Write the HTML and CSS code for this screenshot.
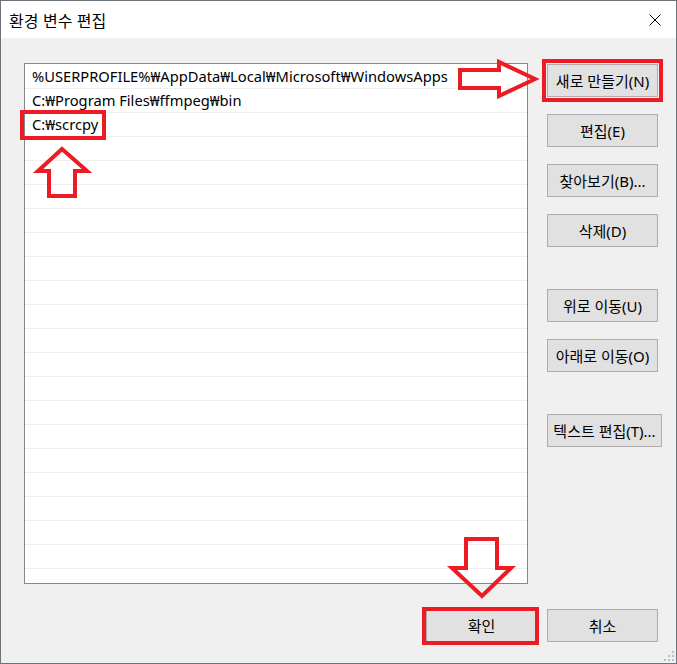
FILE: index.html
```html
<!DOCTYPE html>
<html lang="ko">
<head>
<meta charset="utf-8">
<title>환경 변수 편집</title>
<link rel="stylesheet" href="styles.css">
</head>
<body>
<div class="window">
  <div class="titlebar">
    <span class="title">환경 변수 편집</span>
    <span class="close">
      <svg width="12" height="12" viewBox="0 0 12 12"><path d="M0.5 0.5 L11.5 11.5 M11.5 0.5 L0.5 11.5" stroke="#000" stroke-width="1" fill="none"/></svg>
    </span>
  </div>
  <div class="content">
    <div class="list">
      <div class="row">%USERPROFILE%₩AppData₩Local₩Microsoft₩WindowsApps</div>
      <div class="row">C:₩Program Files₩ffmpeg₩bin</div>
      <div class="row">C:₩scrcpy</div>
      <div class="row"></div><div class="row"></div><div class="row"></div><div class="row"></div>
      <div class="row"></div><div class="row"></div><div class="row"></div><div class="row"></div>
      <div class="row"></div><div class="row"></div><div class="row"></div><div class="row"></div>
      <div class="row"></div><div class="row"></div><div class="row"></div><div class="row"></div>
      <div class="row"></div><div class="row"></div>
    </div>
    <div class="buttons">
      <button class="btn">새로 만들기(N)</button>
      <button class="btn">편집(E)</button>
      <button class="btn">찾아보기(B)...</button>
      <button class="btn">삭제(D)</button>
      <button class="btn gap">위로 이동(U)</button>
      <button class="btn">아래로 이동(O)</button>
      <button class="btn gap wide">텍스트 편집(T)...</button>
    </div>
  </div>
  <div class="footer">
    <button class="btn">확인</button>
    <button class="btn">취소</button>
  </div>
  <svg class="grip" width="12" height="12" viewBox="0 0 12 12">
    <rect x="9" y="1" width="2" height="2" fill="#bfbfbf"/>
    <rect x="5" y="5" width="2" height="2" fill="#bfbfbf"/>
    <rect x="9" y="5" width="2" height="2" fill="#bfbfbf"/>
    <rect x="1" y="9" width="2" height="2" fill="#bfbfbf"/>
    <rect x="5" y="9" width="2" height="2" fill="#bfbfbf"/>
    <rect x="9" y="9" width="2" height="2" fill="#bfbfbf"/>
  </svg>
  <svg class="marks" width="677" height="664" viewBox="0 0 677 664">
    <g fill="none" stroke="#ed1c24" stroke-width="4">
      <rect x="544" y="61" width="117" height="39"/>
      <polygon points="460,70 499,70 499,62 535,79 499,96 499,88 460,88"/>
      <rect x="22" y="112" width="82" height="26"/>
      <polygon points="62,149 87,171 75,171 75,196 49,196 49,171 38,171"/>
      <polygon points="466,539 497,539 497,568 511,568 482,596 452,568 466,568"/>
      <rect x="424" y="609" width="113" height="34"/>
    </g>
  </svg>
</div>
</body>
</html>
```
FILE: styles.css
```css
* { box-sizing: border-box; }
html, body { margin: 0; padding: 0; }
body {
  font-family: "Noto Sans", "Noto Sans CJK KR", sans-serif;
  font-size: 15px;
  color: #000;
  background: #f0f0f0;
}
.window {
  position: relative;
  width: 677px;
  height: 664px;
  border: 1px solid #6e7278;
  background: #f0f0f0;
  display: flex;
  flex-direction: column;
}
.titlebar {
  height: 37px;
  background: #fff;
  display: flex;
  align-items: center;
  justify-content: space-between;
  padding: 0 15px 0 8px;
  flex: none;
}
.title {
  font-family: "Noto Sans CJK KR", sans-serif;
  font-size: 16px;
  line-height: 1;
}
.close { display: flex; }
.content {
  display: flex;
  align-items: flex-start;
  padding: 25px 0 0 23px;
}
.list {
  width: 504px;
  height: 521px;
  border: 1px solid #828790;
  background: #fff;
  padding-top: 1px;
  overflow: hidden;
}
.row {
  height: 24px;
  border-bottom: 1px solid #efefef;
  padding-left: 7px;
  line-height: 22px;
  white-space: nowrap;
  font-size: 14.7px;
}
.buttons {
  display: flex;
  flex-direction: column;
  gap: 17px;
  margin-left: 19px;
  margin-top: 1px;
}
.btn {
  width: 111px;
  height: 33px;
  border: 1px solid #adadad;
  background: #e1e1e1;
  font-family: "Noto Sans", "Noto Sans CJK KR", sans-serif;
  font-size: 15px;
  color: #000;
  padding: 0;
  white-space: nowrap;
  display: flex;
  align-items: center;
  justify-content: center;
}
.btn.gap { margin-top: 25px; }
.btn.wide { width: 115px; }
.footer {
  display: flex;
  justify-content: flex-end;
  gap: 10px;
  margin-top: 25px;
  padding-right: 18px;
}
.grip {
  position: absolute;
  right: 1px;
  bottom: 1px;
}
.marks {
  position: absolute;
  left: -1px;
  top: -1px;
  pointer-events: none;
}
```
